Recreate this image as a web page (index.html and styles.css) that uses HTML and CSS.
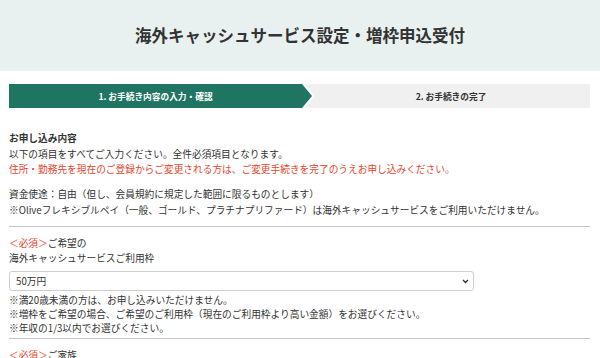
FILE: index.html
```html
<!DOCTYPE html>
<html lang="ja">
<head>
<meta charset="utf-8">
<link rel="stylesheet" href="styles.css">
</head>
<body>
<header class="page-header">
  <h1 class="page-title">海外キャッシュサービス設定・増枠申込受付</h1>
</header>
<main class="content">
  <div class="steps">
    <div class="step step-active">
      <div class="step-active-inner"><span class="step-label">1. お手続き内容の入力・確認</span></div>
    </div>
    <div class="step step-next"><span class="step-label">2. お手続きの完了</span></div>
  </div>

  <section class="intro">
    <p class="intro-block">
      <strong class="intro-title">お申し込み内容</strong><br>
      以下の項目をすべてご入力ください。全件必須項目となります。<br>
      <span class="text-red">住所・勤務先を現在のご登録からご変更される方は、ご変更手続きを完了のうえお申し込みください。</span>
    </p>
    <p class="intro-block">
      資金使途：自由（但し、会員規約に規定した範囲に限るものとします）<br>
      ※Oliveフレキシブルペイ（一般、ゴールド、プラチナプリファード）は海外キャッシュサービスをご利用いただけません。
    </p>
  </section>

  <hr class="divider">

  <section class="field">
    <div class="field-label"><span class="text-red">＜必須＞</span>ご希望の<br>海外キャッシュサービスご利用枠</div>
    <div class="select-wrap">
      <select class="select">
        <option>50万円</option>
      </select>
      <svg class="select-chevron" width="7" height="5" viewBox="0 0 7 5"><path d="M1 1l2.5 2.5L6 1" fill="none" stroke="#333" stroke-width="1.4"/></svg>
    </div>
    <div class="notes">
      ※満20歳未満の方は、お申し込みいただけません。<br>
      ※増枠をご希望の場合、ご希望のご利用枠（現在のご利用枠より高い金額）をお選びください。<br>
      ※年収の1/3以内でお選びください。
    </div>
  </section>

  <hr class="divider">

  <section class="field">
    <div class="field-label"><span class="text-red">＜必須＞</span>ご家族</div>
  </section>
</main>
</body>
</html>
```
FILE: styles.css
```css
html, body {
  margin: 0;
  padding: 0;
  background: #fff;
}
body {
  font-family: "Noto Sans CJK JP", "Noto Sans", sans-serif;
  color: #333;
  font-size: 9.7px;
  overflow: hidden;
}
.page-header {
  background: #e9f1f0;
  height: 71px;
  display: flex;
  align-items: center;
  justify-content: center;
}
.page-title {
  margin: 0;
  font-size: 16.5px;
  font-weight: 700;
  color: #333;
  line-height: 1;
}
.content {
  padding: 13px 10px 0 9px;
}
.steps {
  display: flex;
  height: 24px;
  background: #f0f0f0;
}
.step {
  display: flex;
  align-items: center;
  justify-content: center;
  height: 100%;
}
.step-active {
  width: 306px;
  flex: none;
  background: #fff;
  clip-path: polygon(0 0, 296px 0, 306px 50%, 296px 100%, 0 100%);
  margin-right: -3px;
  justify-content: flex-start;
}
.step-active-inner {
  width: 303px;
  height: 100%;
  background: #1f7562;
  clip-path: polygon(0 0, 293px 0, 303px 50%, 293px 100%, 0 100%);
  display: flex;
  align-items: center;
  justify-content: center;
  padding-right: 10px;
  box-sizing: border-box;
}
.step-active .step-label {
  color: #fff;
}
.step-next {
  flex: 1;
}
.step-label {
  font-size: 8.7px;
  font-weight: 700;
  color: #333;
}
.intro {
  margin-top: 23px;
}
.intro-block {
  margin: 0;
  line-height: 15.5px;
}
.intro-block + .intro-block {
  margin-top: 9.5px;
}
.intro-title {
  font-weight: 700;
}
.text-red {
  color: #e2452d;
}
.divider {
  border: 0;
  border-top: 1px solid #c4c4c4;
  margin: 7.5px 0 0;
  height: 0;
}
.field {
  padding-top: 9px;
}
.field-label {
  line-height: 15px;
}
.select-wrap {
  position: relative;
  width: 465px;
  margin-top: 5px;
}
.select {
  appearance: none;
  -webkit-appearance: none;
  display: block;
  width: 100%;
  height: 20px;
  box-sizing: border-box;
  border: 1px solid #cfcfcf;
  border-radius: 3px;
  background: #fff;
  padding: 0 6px;
  font-family: inherit;
  font-size: 9.7px;
  color: #333;
}
.select-chevron {
  position: absolute;
  right: 5px;
  top: 8px;
}
.notes {
  margin-top: 2px;
  line-height: 14px;
}
.field + .divider {
  margin-top: 3px;
}
```
